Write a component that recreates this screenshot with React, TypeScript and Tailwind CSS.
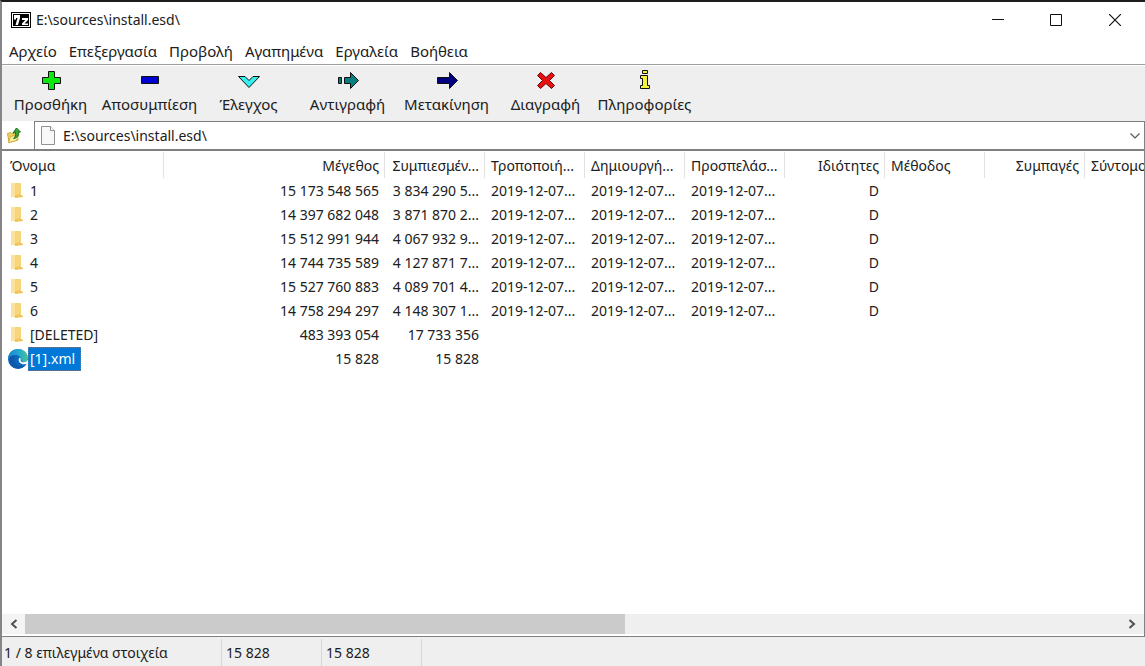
import { ReactNode } from "react";

type Entry = {
  name: string;
  size: string;
  packed: string;
  date?: string;
  attr?: string;
};

const DATE = "2019-12-07...";

const entries: Entry[] = [
  { name: "1", size: "15 173 548 565", packed: "3 834 290 5...", date: DATE, attr: "D" },
  { name: "2", size: "14 397 682 048", packed: "3 871 870 2...", date: DATE, attr: "D" },
  { name: "3", size: "15 512 991 944", packed: "4 067 932 9...", date: DATE, attr: "D" },
  { name: "4", size: "14 744 735 589", packed: "4 127 871 7...", date: DATE, attr: "D" },
  { name: "5", size: "15 527 760 883", packed: "4 089 701 4...", date: DATE, attr: "D" },
  { name: "6", size: "14 758 294 297", packed: "4 148 307 1...", date: DATE, attr: "D" },
  { name: "[DELETED]", size: "483 393 054", packed: "17 733 356" },
  { name: "[1].xml", size: "15 828", packed: "15 828" },
];

const menus = ["Αρχείο", "Επεξεργασία", "Προβολή", "Αγαπημένα", "Εργαλεία", "Βοήθεια"];

const tools: { label: string; icon: ReactNode }[] = [
  {
    label: "Προσθήκη",
    icon: <path d="M9.500 3.500h6v6h6v6h-6v6h-6v-6h-6v-6h6z" fill="#0be80b" />,
  },
  {
    label: "Αποσυμπίεση",
    icon: <path d="M3.5 8.5h17v7h-17z" fill="#0000d0" />,
  },
  {
    label: "Έλεγχος",
    icon: <path d="M1.500 8.500h6.500l4 4 4-4h6.500L12 19.500z" fill="#35efef" />,
  },
  {
    label: "Αντιγραφή",
    icon: <path d="M2.5 9.5h3v6h-3zM8.500 9.500h6v-5l8 8-8 8v-5h-6z" fill="#087f7f" />,
  },
  {
    label: "Μετακίνηση",
    icon: <path d="M2.500 9.500h12v-5l8 8-8 8v-5h-12z" fill="#000080" />,
  },
  {
    label: "Διαγραφή",
    icon: (
      <path
        d="M6.500 4.500l5.500 5 5.500-5 3 3-5 5 5 5-3 3-5.500-5-5.500 5-3-3 5-5-5-5z"
        fill="#e81010"
        stroke="#5c0909"
      />
    ),
  },
  {
    label: "Πληροφορίες",
    icon: <path d="M9.500 2.500h5v3h-5zM7.500 7.500h7v10h2v3h-9v-3h2v-7h-2z" fill="#f4f43c" />,
  },
];

const columns = [
  { label: "Όνομα", right: false },
  { label: "Μέγεθος", right: true },
  { label: "Συμπιεσμέν...", right: true },
  { label: "Τροποποιή...", right: false },
  { label: "Δημιουργή...", right: false },
  { label: "Προσπελάσ...", right: false },
  { label: "Ιδιότητες", right: true },
  { label: "Μέθοδος", right: false },
  { label: "Συμπαγές", right: true },
  { label: "Σύντομο", right: false },
];

function AppIcon() {
  return (
    <svg width="20" height="16" viewBox="0 0 20 16" aria-hidden="true">
      <rect width="20" height="16" fill="#000" />
      <rect x="1.500" y="1.500" width="17" height="13" fill="none" stroke="#fff" />
      <path d="M3 3h6v3L7 13H4.500L6.500 6H5v1.500H3zM11 6h6v2l-3.500 3.500H17V13h-6v-1.500L14.300 8H11z" fill="#fff" />
    </svg>
  );
}

function UpFolderIcon() {
  return (
    <svg width="16" height="18" viewBox="0 0 16 18" aria-hidden="true">
      <path d="M.500 7.500l3.500-1 1 1 5-1.500 1 8-9 2.500z" fill="#ecd35c" stroke="#c9aa45" />
      <path d="M1.500 16.500l2-6 8.500-2-2.500 6z" fill="#faf0a0" stroke="#d0ae42" />
      <path d="M6.500 12.500C8.500 11 9 9 8.500 6.500L6 7l3.500-5L13.500 6l-2 .300c.600 3-1.500 6-5 6.200z" fill="#38a534" stroke="#176b1c" />
    </svg>
  );
}

function FileIcon() {
  return (
    <svg width="14" height="19" viewBox="0 0 14 19" aria-hidden="true">
      <path d="M.500 .500h9l4 4v14h-13z" fill="#f8f8f8" stroke="#909090" />
      <path d="M9.500 .500v4h4" fill="#fff" stroke="#909090" />
    </svg>
  );
}

function FolderIcon() {
  return (
    <svg width="20" height="20" viewBox="0 0 20 20" aria-hidden="true" className="shrink-0">
      <path d="M3 2h10v12l2 1v1H3z" fill="#f6d57c" />
      <path d="M3 2h4v14.500l-4-1z" fill="#fbe39d" />
      <path d="M7 14.500l4.500-1L15 15v1l-8 1z" fill="#eec35b" />
    </svg>
  );
}

function EdgeIcon() {
  return (
    <svg width="20" height="20" viewBox="0 0 20 20" aria-hidden="true" className="shrink-0">
      <defs>
        <linearGradient id="edgeTop" x1="0" y1="0.500" x2="1" y2="0.500">
          <stop offset="0" stopColor="#1683cf" />
          <stop offset="0.550" stopColor="#25a9d0" />
          <stop offset="1" stopColor="#4cc48c" />
        </linearGradient>
      </defs>
      <circle cx="10" cy="10" r="10" fill="#0c68bd" />
      <path d="M0 10C0 4 4.500 0 10 0c6 0 10 4.500 10 9 0 3-2 4.500-4.500 4.500l-3-3C13 8 11 6 8 6 4 6 1 7.500 0 10z" fill="url(#edgeTop)" />
      <path d="M6.500 9c-1 5 3 8.500 10 8-5 4.500-12.500 3-15-3C0 9 3 6 7.500 6.500 7 7 6.700 8 6.500 9z" fill="#0f59ab" />
      <path d="M11.800 8.500c1 1 .700 2 .700 2.800.300 1.700 2 2.200 3.500 2 1.500-.100 2.700-.800 4-2.300v3.200c-2.500 1.500-5.800 1.500-7.700-.100-2-1.700-2.300-4-.500-5.600z" fill="#fff" />
    </svg>
  );
}

const right = "whitespace-nowrap p-0 pr-1.5 text-right";
const left = "whitespace-nowrap p-0 pl-1.5 text-left";

export default function App() {
  return (
    <div className="flex h-screen flex-col overflow-hidden border-t-2 border-l-2 border-t-[#1e1c1c] border-l-[#858589] bg-white font-['Noto_Sans','Open_Sans',sans-serif] text-sm leading-5 text-[#202020]">
      <header>
        <div className="flex h-9 items-center pl-[9px]">
          <AppIcon />
          <h1 className="ml-[5px] flex-1">E:\sources\install.esd\</h1>
          <button aria-label="Ελαχιστοποίηση" className="flex h-9 w-[58px] items-center justify-center">
            <svg width="12" height="12" viewBox="0 0 12 12" aria-hidden="true">
              <path d="M0 5.500h12" stroke="#111" />
            </svg>
          </button>
          <button aria-label="Μεγιστοποίηση" className="flex h-9 w-[58px] items-center justify-center">
            <svg width="12" height="12" viewBox="0 0 12 12" fill="none" aria-hidden="true">
              <path d="M.500 .500h11v11h-11z" stroke="#111" />
            </svg>
          </button>
          <button aria-label="Κλείσιμο" className="flex h-9 w-[60px] items-center justify-center">
            <svg width="12" height="12" viewBox="0 0 12 12" fill="none" aria-hidden="true">
              <path d="M0 0l12 12M12 0L0 12" stroke="#111" strokeWidth="1.200" />
            </svg>
          </button>
        </div>
        <nav className="flex h-[27px] items-center gap-3 border-b border-[#a0a0a0] pl-[7px] text-[15px]">
          {menus.map((m) => (
            <button key={m}>{m}</button>
          ))}
        </nav>
      </header>

      <div className="flex h-14 border-t border-white bg-[#efefef] text-[15px]" role="toolbar">
        {tools.map((t) => (
          <button
            key={t.label}
            className="flex w-[99px] flex-col items-center gap-0.5 whitespace-nowrap pt-0.5 pr-0.5"
          >
            <svg width="24" height="24" viewBox="0 0 24 24" stroke="#101010" strokeWidth="1" aria-hidden="true">
              {t.icon}
            </svg>
            {t.label}
          </button>
        ))}
      </div>

      <div className="flex h-[30px] border-b-2 border-[#808080]">
        <button aria-label="Ένα επίπεδο πάνω" className="flex w-8 items-center pl-[5px]">
          <UpFolderIcon />
        </button>
        <div className="relative flex flex-1 items-center border border-b-0 border-[#808080] pl-1.5">
          <FileIcon />
          <select aria-label="Διεύθυνση" className="h-full flex-1 appearance-none bg-transparent pl-2 outline-none">
            <option>E:\sources\install.esd\</option>
          </select>
          <svg
            width="10"
            height="6"
            viewBox="0 0 10 6"
            fill="none"
            className="pointer-events-none absolute right-1"
            aria-hidden="true"
          >
            <path d="M.500 .500L5 5 9.500 .500" stroke="#555" strokeWidth="1.200" />
          </svg>
        </div>
      </div>

      <main className="flex min-h-0 flex-1 flex-col border-r border-b border-[#808080] pb-0.5">
        <div className="min-h-0 flex-1 overflow-hidden">
          <table className="w-[1182px] table-fixed border-collapse">
            <colgroup>
              <col className="w-[162px]" />
              <col className="w-[221px]" />
              <col span={8} className="w-[100px]" />
            </colgroup>
            <thead>
              <tr className="h-7">
                {columns.map((c, i) => (
                  <th key={c.label} className="p-0 font-normal">
                    <div
                      className={`h-[26px] whitespace-nowrap border-r border-[#e2e2e2] pt-px leading-[26px] ${
                        c.right ? "pr-[5px] text-right" : i === 0 ? "pl-2 text-left" : "pl-1.5 text-left"
                      }`}
                    >
                      {c.label}
                    </div>
                  </th>
                ))}
              </tr>
            </thead>
            <tbody>
              {entries.map((e) => {
                const selected = e.name === "[1].xml";
                return (
                  <tr key={e.name} className="h-6" aria-selected={selected}>
                    <td className="p-0">
                      <div className="flex h-6 items-center pl-1.5">
                        {selected ? <EdgeIcon /> : <FolderIcon />}
                        <span
                          className={
                            selected
                              ? "border border-dotted border-[#5f7f9c] bg-[#0078d7] pr-[5px] pl-px leading-[22px] text-white"
                              : "pl-0.5"
                          }
                        >
                          {e.name}
                        </span>
                      </div>
                    </td>
                    <td className={right}>{e.size}</td>
                    <td className={right}>{e.packed}</td>
                    <td className={left}>{e.date}</td>
                    <td className={left}>{e.date}</td>
                    <td className={left}>{e.date}</td>
                    <td className={right}>{e.attr}</td>
                    <td />
                    <td />
                    <td />
                  </tr>
                );
              })}
            </tbody>
          </table>
        </div>
        <div className="flex h-5 bg-[#efefef]">
          <button aria-label="Κύλιση αριστερά" className="flex w-[23px] items-center justify-center bg-[#f4f4f4]">
            <svg width="8" height="10" viewBox="0 0 8 10" fill="none" aria-hidden="true">
              <path d="M6.500 1L2 5l4.500 4" stroke="#505050" strokeWidth="2" />
            </svg>
          </button>
          <div className="flex-1">
            <div className="h-full w-[54.8%] bg-[#cbcbcb]" />
          </div>
          <button aria-label="Κύλιση δεξιά" className="flex w-6 items-center justify-center">
            <svg width="8" height="10" viewBox="0 0 8 10" fill="none" aria-hidden="true">
              <path d="M1.500 1L6 5 1.500 9" stroke="#505050" strokeWidth="2" />
            </svg>
          </button>
        </div>
      </main>

      <footer className="flex h-[29px] bg-[#efefef] pt-0.5">
        <div className="w-[220px] border-r border-[#d7d7d7] pl-0.5 leading-7">1 / 8 επιλεγμένα στοιχεία</div>
        <div className="w-[100px] border-r border-[#d7d7d7] pl-1 leading-7">15 828</div>
        <div className="w-[100px] border-r border-[#d7d7d7] pl-1 leading-7">15 828</div>
      </footer>
    </div>
  );
}
